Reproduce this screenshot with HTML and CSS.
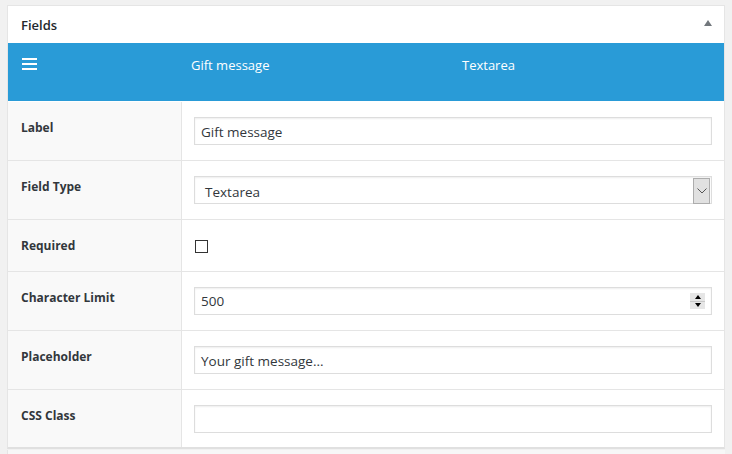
FILE: index.html
```html
<!DOCTYPE html>
<html>

<head>
  <meta charset="UTF-8">
  <title>Fields</title>
  <link rel="stylesheet" href="styles.css">
</head>

<body>

  <div class="postbox">
    <div class="postbox-header">
      <h2>Fields</h2>
      <span class="toggle-arrow"></span>
    </div>

    <div class="field-bar">
      <span class="field-handle">
        <svg width="15" height="12" viewBox="0 0 15 12">
          <rect x="0" y="0" width="15" height="2" fill="#fff"/>
          <rect x="0" y="5" width="15" height="2" fill="#fff"/>
          <rect x="0" y="10" width="15" height="2" fill="#fff"/>
        </svg>
      </span>
      <span class="field-name">Gift message</span>
      <span class="field-type">Textarea</span>
    </div>

    <table class="form-table">
      <tr>
        <th>Label</th>
        <td><div class="text-input">Gift message</div></td>
      </tr>
      <tr>
        <th>Field Type</th>
        <td>
          <div class="text-input select-input">
            <span class="select-value">Textarea</span>
            <span class="select-btn">
              <svg width="10" height="6" viewBox="0 0 10 6">
                <polyline points="0.5,0.5 5,5 9.5,0.5" fill="none" stroke="#555" stroke-width="1"/>
              </svg>
            </span>
          </div>
        </td>
      </tr>
      <tr class="short-row">
        <th>Required</th>
        <td><span class="checkbox"></span></td>
      </tr>
      <tr>
        <th>Character Limit</th>
        <td>
          <div class="text-input number-input">
            <span>500</span>
            <span class="spinner">
              <span class="spin-up"></span>
              <span class="spin-down"></span>
            </span>
          </div>
        </td>
      </tr>
      <tr>
        <th>Placeholder</th>
        <td><div class="text-input">Your gift message...</div></td>
      </tr>
      <tr class="last-row">
        <th>CSS Class</th>
        <td><div class="text-input"></div></td>
      </tr>
    </table>
  </div>

  <div class="next-box"></div>

</body>

</html>
```

FILE: styles.css
```css
body {
  margin: 0;
  padding: 5px 7px 0 7px;
  background-color: #f1f1f1;
  font-family: "Open Sans", "Noto Sans", sans-serif;
  color: #23282d;
  overflow: hidden;
}

.postbox {
  background-color: #fff;
  border: 1px solid #e5e5e5;
  border-bottom: 2px solid #e0e0e0;
}

.postbox-header {
  display: flex;
  align-items: center;
  justify-content: space-between;
  height: 37px;
  padding: 0 12px 0 13px;
}

.postbox-header h2 {
  margin: 0;
  font-size: 13px;
  font-weight: 600;
  color: #23282d;
}

.toggle-arrow {
  width: 0;
  height: 0;
  border-left: 4px solid transparent;
  border-right: 4px solid transparent;
  border-bottom: 6px solid #72777c;
  margin-top: -3px;
}

.field-bar {
  display: flex;
  align-items: flex-start;
  height: 58px;
  background-color: #299bd7;
  color: #fff;
  font-size: 13px;
  border-bottom: 1px solid #fff;
}

.field-handle {
  width: 169px;
  padding: 15px 0 0 14px;
  line-height: 0;
}

.field-name {
  width: 271px;
  padding-top: 13px;
}

.field-type {
  padding-top: 13px;
}

.form-table {
  width: 100%;
  border-collapse: collapse;
}

.form-table th {
  width: 160px;
  text-align: left;
  vertical-align: top;
  padding: 17px 0 0 13px;
  height: 41px;
  background-color: #f9f9f9;
  border-right: 1px solid #e5e5e5;
  font-size: 12px;
  font-weight: 700;
  color: #32373c;
}

.form-table td {
  vertical-align: top;
  padding: 15px 12px 0 12px;
}

.form-table th,
.form-table td {
  border-bottom: 1px solid #e5e5e5;
}

.form-table .short-row th {
  height: 34px;
}

.form-table .last-row th {
  height: 40px;
}

.form-table .last-row th,
.form-table .last-row td {
  border-bottom: none;
}

.text-input {
  box-sizing: border-box;
  height: 28px;
  border: 1px solid #ddd;
  box-shadow: inset 0 1px 2px rgba(0, 0, 0, 0.07);
  padding: 0 6px;
  font-size: 13.5px;
  line-height: 28px;
  color: #32373c;
}

.select-input {
  display: flex;
  justify-content: space-between;
  padding-right: 0;
}

.select-value {
  padding: 1px 0 0 4px;
}

.select-btn {
  display: flex;
  align-items: center;
  justify-content: center;
  width: 15px;
  height: 24px;
  margin: 1px 1px 0 0;
  background-color: #e1e1e1;
  border: 1px solid #adadad;
}

.number-input {
  display: flex;
  justify-content: space-between;
  align-items: center;
  padding-right: 6px;
}

.spinner {
  display: flex;
  flex-direction: column;
  width: 15px;
  height: 16px;
  background-color: #e6e6e6;
}

.spin-up,
.spin-down {
  flex: 1;
  display: flex;
  align-items: center;
  justify-content: center;
}

.spin-down {
  border-top: 1px solid #c8c8c8;
}

.spin-up::after {
  content: "";
  border-left: 3px solid transparent;
  border-right: 3px solid transparent;
  border-bottom: 4px solid #000;
}

.spin-down::after {
  content: "";
  border-left: 3px solid transparent;
  border-right: 3px solid transparent;
  border-top: 4px solid #000;
}

.checkbox {
  display: block;
  width: 11px;
  height: 11px;
  margin: 5px 0 0 1px;
  border: 1px solid #333;
  background-color: #fff;
}

.next-box {
  height: 20px;
  margin-top: 1px;
  background-color: #f7f7f7;
  border-left: 1px solid #e5e5e5;
}
```
